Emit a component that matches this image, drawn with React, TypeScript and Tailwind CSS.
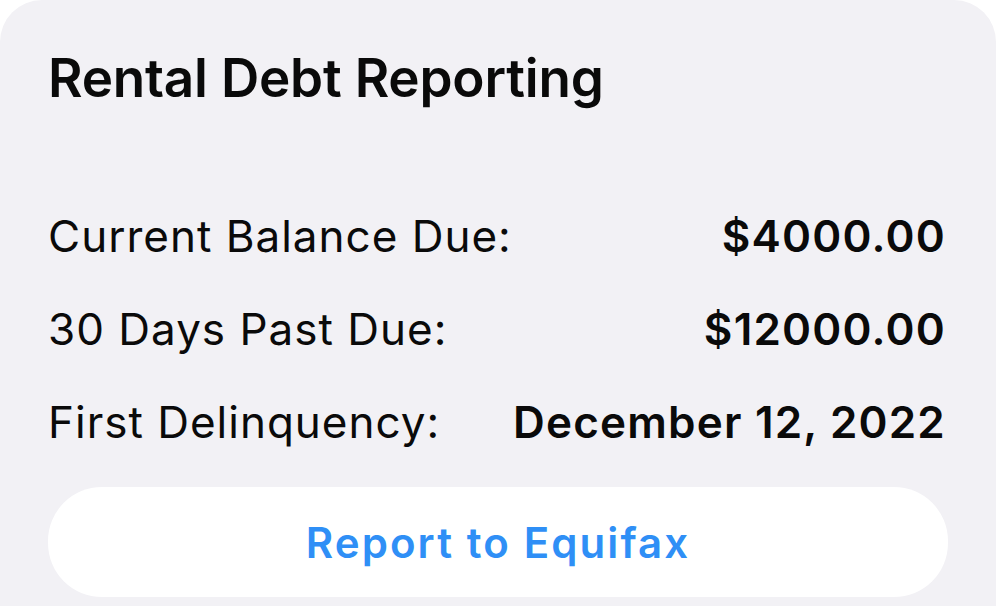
export default function App() {
  const rows = [
    { label: "Current Balance Due:", value: "$4000.00" },
    { label: "30 Days Past Due:", value: "$12000.00" },
    { label: "First Delinquency:", value: "December 12, 2022" },
  ];

  return (
    <div className="h-[606px] w-[996px] overflow-hidden bg-white font-['Inter',sans-serif]">
      <div className="h-[620px] rounded-t-[42px] bg-[#f2f1f5] px-[48px] pt-[46px] text-[#0a0a0a]">
        <h2 className="text-[53px] font-semibold leading-[64px] tracking-[-0.2px]">
          Rental Debt Reporting
        </h2>

        <div className="mt-[100px] flex flex-col gap-[41px] pr-[2px]">
          {rows.map((r) => (
            <div key={r.label} className="flex items-center justify-between text-[44px] leading-[52px]">
              <span className="font-normal tracking-[1px]">{r.label}</span>
              <span className="font-semibold tracking-[1.2px]">{r.value}</span>
            </div>
          ))}
        </div>

        <button className="mt-[39px] flex h-[110px] w-full items-center justify-center rounded-[54px] bg-white text-[42px] font-semibold tracking-[2.1px] text-[#2f8ff6]">
          Report to Equifax
        </button>
      </div>
    </div>
  );
}
